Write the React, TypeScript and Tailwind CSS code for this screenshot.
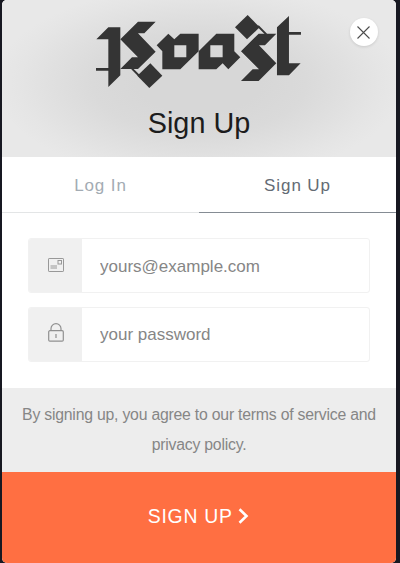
import React from "react";

function RoastLogo() {
  return (
    <svg
      className="h-[75px] w-[205.3px]"
      viewBox="288 42 616 225"
      fill="#343434"
      role="img"
      aria-label="Roast"
    >
      <path d="M289 118 325 82H361V226L325 261V118ZM288 204H325V212H288Z" />
      <path d="M361 118 414 65H467L433 100H414L467 155 414 207H361L396 172H414Z" />
      <path d="M451 190 487 227 448 264 412 227Z" />
      <path d="M396 206 421 231" stroke="#343434" strokeWidth="6" />
      <path
        fillRule="evenodd"
        d="M470 136 505 101 523 118 541 101H596V154L541 208H487V154ZM523 136V172H559V136Z"
      />
      <path
        fillRule="evenodd"
        d="M596 154 649 101H703V154L721 172 685 208 668 190 649 208H596ZM631 136V172H668V136Z"
      />
      <path d="M743 45 779 82 741 118 705 82Z" />
      <path d="M774 78 799 103" stroke="#343434" strokeWidth="6" />
      <path d="M723 154 776 101H829L795 136H777L829 190 776 243H723L758 208H777Z" />
      <path d="M831 82 867 48V190H902L867 226H831ZM867 96H903V104H867Z" />
    </svg>
  );
}

function MailIcon() {
  return (
    <svg className="mb-px h-[14px] w-[16px]" viewBox="0 0 16 14" fill="none" stroke="#989898">
      <rect x="0.5" y="0.5" width="15" height="13" rx="0.6" />
      <rect x="10" y="2.5" width="3.5" height="3.5" />
      <path d="M2.5 8H9M2.5 10H9" />
    </svg>
  );
}

function LockIcon() {
  return (
    <svg className="mb-[3px] h-[19px] w-[16px]" viewBox="0 0 16 19" fill="none" stroke="#909090" strokeWidth="1.2">
      <rect x="0.7" y="7.7" width="14.6" height="10.4" rx="1.2" />
      <path d="M3 7.7V5.6a5 5 0 0 1 10 0V7.7M8 11V15" />
    </svg>
  );
}

function Field({ icon, type, placeholder }: { icon: React.ReactNode; type: string; placeholder: string }) {
  return (
    <label className="flex h-[55px] overflow-hidden rounded-[3px] border border-[#f1f1f1] bg-white">
      <span className="flex w-[53px] shrink-0 items-center justify-center bg-[#f0f0f0]">{icon}</span>
      <input
        type={type}
        placeholder={placeholder}
        className="min-w-0 flex-1 bg-transparent px-[18px] pt-[2px] text-[17px] text-[#777] outline-none placeholder:text-[#868686]"
      />
    </label>
  );
}

export default function App() {
  return (
    <div className="h-[563px] w-[400px] overflow-hidden bg-[#171821] pl-[2px] font-['Liberation_Sans',Arial,sans-serif]">
      <main className="flex h-full w-[394px] flex-col overflow-hidden rounded-[5px] bg-white">
        <header className="relative flex h-[157px] shrink-0 flex-col items-center bg-[#e8e8e8] bg-[radial-gradient(ellipse_205px_98px_at_50%_53%,#d7d7d7_0%,#d7d7d7_30%,#dadada_52%,#e0e0e0_72%,#e5e5e5_88%,#e8e8e8_100%)] pt-[14px]">
          <RoastLogo />
          <h1 className="mt-[16px] text-[28.8px] leading-[36px] text-[#1c1c1c]">Sign Up</h1>
          <button
            aria-label="Close"
            className="absolute top-[18px] right-[18.5px] flex size-[28px] items-center justify-center rounded-full bg-white shadow-[0_1px_3px_rgba(0,0,0,0.12)]"
          >
            <svg className="size-[13px]" viewBox="0 0 13 13" fill="none" stroke="#4d4d4d" strokeWidth="1.1">
              <path d="M0.5 0.5 12.5 12.5M12.5 0.5 0.5 12.5" />
            </svg>
          </button>
        </header>

        <nav className="flex h-[56px] shrink-0 text-[17px] tracking-[0.9px]">
          <button className="w-[197px] border-b border-[#e3e5e6] pt-[2px] text-[#a3abb3]">Log In</button>
          <button className="w-[197px] border-b border-[#858c94] pt-[2px] text-[#646b74]">Sign Up</button>
        </nav>

        <form className="flex h-[174.5px] shrink-0 flex-col gap-[13.5px] pt-[25px] pr-[26px] pl-[26px]">
          <Field icon={<MailIcon />} type="email" placeholder="yours@example.com" />
          <Field icon={<LockIcon />} type="password" placeholder="your password" />
        </form>

        <p className="h-[84px] shrink-0 bg-[#ededed] px-[10px] pt-[12.5px] text-center text-[15.8px] leading-[29.5px] tracking-[-0.22px] text-[#868686]">
          By signing up, you agree to our terms of service and privacy policy.
        </p>

        <button className="flex flex-1 items-center justify-center gap-[5.5px] bg-[#ff6f42] pr-px pb-[2px] text-[19.4px] tracking-[0.75px] text-white">
          <span>SIGN UP</span>
          <svg className="h-[16px] w-[11px]" viewBox="0 0 11 16" fill="none" stroke="white" strokeWidth="2.6">
            <path d="M1.5 1.2 8.5 8 1.5 14.8" />
          </svg>
        </button>
      </main>
    </div>
  );
}
